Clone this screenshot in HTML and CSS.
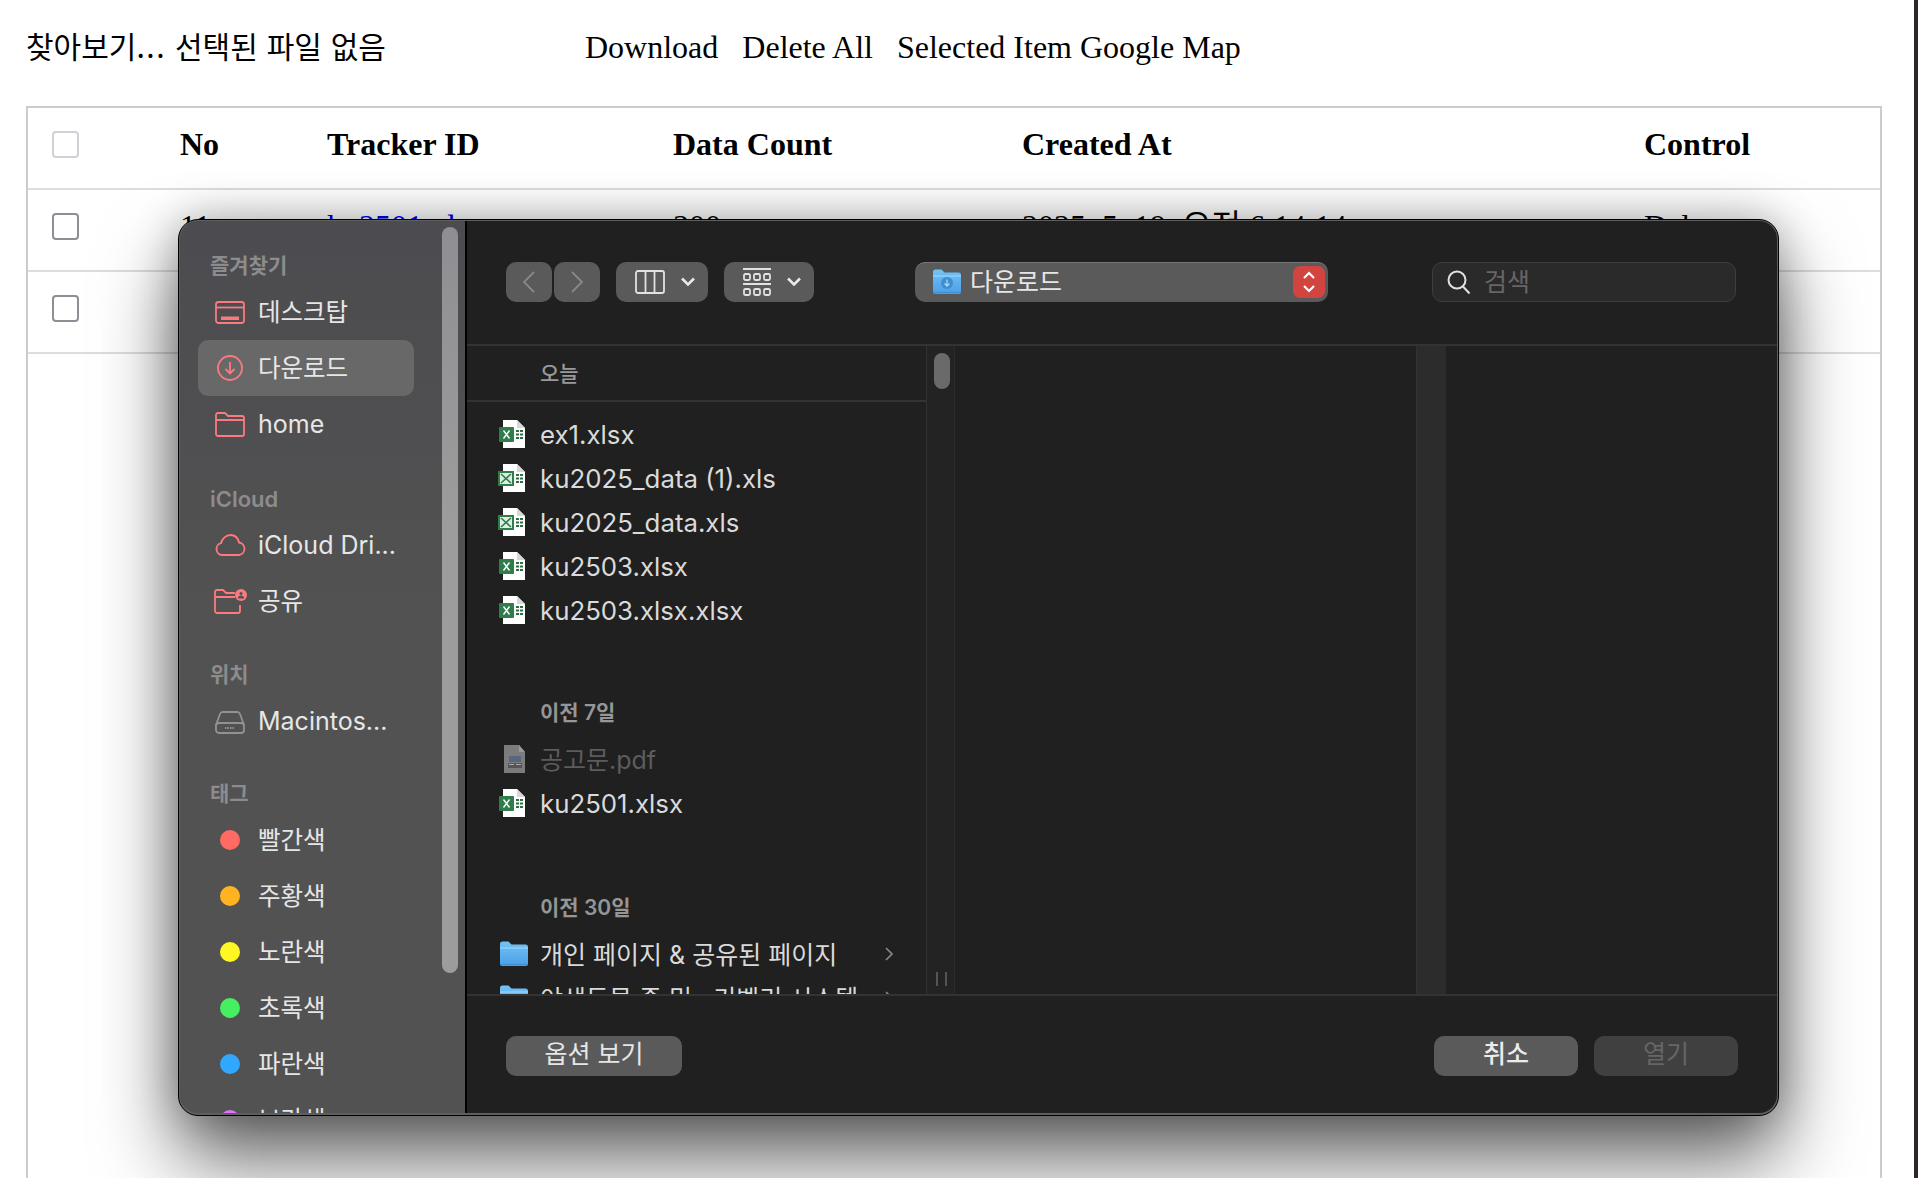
FILE: index.html
```html
<!DOCTYPE html>
<html lang="ko">
<head>
    <meta charset="UTF-8">
    <title>Tracker Data</title>
    <link rel="stylesheet" href="styles.css">
</head>
<body>
    <svg class="defs" width="0" height="0">
        <defs>
            <linearGradient id="folder-fill" x1="0" y1="0" x2="0" y2="1">
                <stop offset="0" stop-color="#74c2f6"/>
                <stop offset="1" stop-color="#4a9fe6"/>
            </linearGradient>
        </defs>
        <symbol id="xlsx" viewBox="0 0 28 30">
            <path d="M5 1h14l8 8v20H5z" fill="#fff"/>
            <path d="M19 1l8 8h-8z" fill="#d8d8d8"/>
            <rect x="1" y="8" width="15" height="15" rx="1" fill="#2f7d4b"/>
            <path d="M5.5 11.5l6 8M11.5 11.5l-6 8" stroke="#fff" stroke-width="1.4"/>
            <path d="M18 11h3v2h-3zM22 11h3v2h-3zM18 14.5h3v2h-3zM22 14.5h3v2h-3zM18 18h3v2h-3zM22 18h3v2h-3z" fill="#2f6d45"/>
        </symbol>
        <symbol id="xls" viewBox="0 0 28 30">
            <path d="M5 1h14l8 8v20H5z" fill="#fff"/>
            <path d="M19 1l8 8h-8z" fill="#d8d8d8"/>
            <rect x="0" y="8" width="16" height="15" fill="#2f7d4b"/>
            <rect x="2" y="10" width="12" height="11" fill="#dcefe2"/>
            <path d="M3 11l10 9M13 11l-10 9" stroke="#2f7d4b" stroke-width="1.6"/>
            <path d="M18 11h3v2h-3zM22 11h3v2h-3zM18 14.5h3v2h-3zM22 14.5h3v2h-3zM18 18h3v2h-3zM22 18h3v2h-3z" fill="#2f6d45"/>
        </symbol>
        <symbol id="pdf" viewBox="0 0 28 30">
            <path d="M6 1h15l6 7v21H6z" fill="#7c7c7c"/>
            <path d="M21 1l6 7h-6z" fill="#999"/>
            <rect x="11" y="12" width="12" height="6" fill="#57677f"/>
            <path d="M10 19h14v5H10z" fill="#555"/>
            <path d="M11 20.5h5M18 20.5h5" stroke="#aaa"/>
        </symbol>
        <symbol id="folder" viewBox="0 0 28 26">
            <path d="M0 3a2.500 2.500 0 0 1 2.500-2.500h6l3 3h14a2.500 2.500 0 0 1 2.500 2.500v17a2 2 0 0 1-2 2H2a2 2 0 0 1-2-2z" fill="url(#folder-fill)"/>
            <path d="M0 6h28v2H0z" fill="#86cbf8"/>
            <path d="M0 23h28v1H0z" fill="#3f8ed2"/>
        </symbol>
    </svg>

    <div class="page">
        <div class="topbar">
            <span class="file-input">찾아보기<span class="dots">...</span> 선택된 파일 없음</span>
            <button class="text-btn">Download</button>
            <button class="text-btn">Delete All</button>
            <button class="text-btn">Selected Item Google Map</button>
        </div>

        <div class="table-box">
            <table class="tracker-table">
                <colgroup>
                    <col class="col-check">
                    <col class="col-no">
                    <col class="col-tracker">
                    <col class="col-count">
                    <col class="col-created">
                    <col>
                </colgroup>
                <thead>
                    <tr>
                        <th><input type="checkbox" class="check check-head"></th>
                        <th>No</th>
                        <th>Tracker ID</th>
                        <th>Data Count</th>
                        <th>Created At</th>
                        <th>Control</th>
                    </tr>
                </thead>
                <tbody>
                    <tr>
                        <td><input type="checkbox" class="check"></td>
                        <td>11</td>
                        <td><a href="#">ku2501_data</a></td>
                        <td>300</td>
                        <td>2025. 5. 19. 오전 6:14:14</td>
                        <td>Delete</td>
                    </tr>
                    <tr>
                        <td><input type="checkbox" class="check"></td>
                        <td></td>
                        <td></td>
                        <td></td>
                        <td></td>
                        <td></td>
                    </tr>
                </tbody>
            </table>
        </div>
    </div>
    <div class="screen-edge"></div>

    <!-- file dialog -->
    <div class="dialog">
        <aside class="sidebar">
            <div class="side-scroll"></div>

            <section class="side-section">
                <h4>즐겨찾기</h4>
                <div class="side-item">
                    <svg class="side-icon" viewBox="0 0 30 30"><rect x="1" y="5" width="28" height="21" rx="2.500"/><path d="M1 10.500h28"/><rect class="solid" x="6" y="19.500" width="18" height="3.500"/></svg>
                    <span class="kr">데스크탑</span>
                </div>
                <div class="side-item selected">
                    <svg class="side-icon" viewBox="0 0 30 30"><circle cx="15" cy="15" r="12"/><path d="M15 9v11M10.500 16l4.500 4.500 4.500-4.500"/></svg>
                    <span class="kr">다운로드</span>
                </div>
                <div class="side-item">
                    <svg class="side-icon" viewBox="0 0 30 30"><path d="M1 6a2 2 0 0 1 2-2h7l3 3h14a2 2 0 0 1 2 2v16a2 2 0 0 1-2 2H3a2 2 0 0 1-2-2zM1 11h28"/></svg>
                    home
                </div>
            </section>

            <section class="side-section">
                <h4 class="latin-head">iCloud</h4>
                <div class="side-item">
                    <svg class="side-icon" viewBox="0 0 30 30"><path d="M7 25a6 6 0 0 1-1-11.800C7 8.500 11 5 15.500 5c4.500 0 7.500 3 8.500 7.500a6.300 6.300 0 0 1 0 12.500z"/></svg>
                    iCloud Dri...
                </div>
                <div class="side-item">
                    <svg class="side-icon" viewBox="0 0 30 30"><path d="M25 19v6a2 2 0 0 1-2 2H2a2 2 0 0 1-2-2V6a2 2 0 0 1 2-2h6l3 3h9M0 11h20"/><circle class="solid" cx="26" cy="9" r="6"/><circle cx="26" cy="7.500" r="1.500" fill="#525252" stroke="none"/><path d="M23 12.500a3 3 0 0 1 6 0" fill="#525252" stroke="none"/></svg>
                    <span class="kr">공유</span>
                </div>
            </section>

            <section class="side-section">
                <h4>위치</h4>
                <div class="side-item">
                    <svg class="side-icon grey" viewBox="0 0 30 30"><path d="M1 19l4-11a3 3 0 0 1 3-2h14a3 3 0 0 1 3 2l4 11"/><rect x="1" y="17" width="28" height="10" rx="3"/><path d="M10 22h10" stroke-dasharray="1.500 1"/></svg>
                    Macintos...
                </div>
            </section>

            <section class="side-section">
                <h4>태그</h4>
                <div class="side-item"><span class="tag-slot"><i class="tag-dot dot-red"></i></span><span class="kr">빨간색</span></div>
                <div class="side-item"><span class="tag-slot"><i class="tag-dot dot-orange"></i></span><span class="kr">주황색</span></div>
                <div class="side-item"><span class="tag-slot"><i class="tag-dot dot-yellow"></i></span><span class="kr">노란색</span></div>
                <div class="side-item"><span class="tag-slot"><i class="tag-dot dot-green"></i></span><span class="kr">초록색</span></div>
                <div class="side-item"><span class="tag-slot"><i class="tag-dot dot-blue"></i></span><span class="kr">파란색</span></div>
                <div class="side-item"><span class="tag-slot"><i class="tag-dot dot-purple"></i></span><span class="kr">보라색</span></div>
            </section>
        </aside>

        <div class="main">
            <div class="toolbar">
                <div class="tool-btn nav-btn">
                    <svg width="14" height="24" viewBox="0 0 14 24"><path d="M12 2L2 12l10 10"/></svg>
                </div>
                <div class="tool-btn nav-btn nav-next">
                    <svg width="14" height="24" viewBox="0 0 14 24"><path d="M2 2l10 10L2 22"/></svg>
                </div>
                <div class="tool-btn view-btn">
                    <svg class="light" width="30" height="24" viewBox="0 0 30 24"><rect x="1" y="1" width="28" height="22" rx="2"/><path d="M10.500 1v22M19.500 1v22"/></svg>
                    <svg class="caret" width="14" height="9" viewBox="0 0 14 9"><path d="M1 1.500l6 6 6-6"/></svg>
                </div>
                <div class="tool-btn arrange-btn">
                    <svg class="light" width="28" height="28" viewBox="0 0 28 28"><path d="M0 1h28M0 16h28"/><rect x="1" y="6" width="6" height="6" rx="1.500"/><rect x="11" y="6" width="6" height="6" rx="1.500"/><rect x="21" y="6" width="6" height="6" rx="1.500"/><rect x="1" y="21" width="6" height="6" rx="1.500"/><rect x="11" y="21" width="6" height="6" rx="1.500"/><rect x="21" y="21" width="6" height="6" rx="1.500"/></svg>
                    <svg class="caret" width="14" height="9" viewBox="0 0 14 9"><path d="M1 1.500l6 6 6-6"/></svg>
                </div>
                <div class="location">
                    <svg width="28" height="26" viewBox="0 0 28 26"><use href="#folder"/><circle cx="14" cy="14" r="6" fill="#3f8fd0"/><path d="M14 10.500v6M11.500 14.500l2.500 2.500 2.500-2.500" stroke="#a9d8f8" fill="none" stroke-width="1.300"/></svg>
                    <span class="location-name">다운로드</span>
                    <div class="stepper">
                        <svg width="14" height="26" viewBox="0 0 14 26"><path d="M2 9l5-5 5 5M2 17l5 5 5-5"/></svg>
                    </div>
                </div>
                <div class="search">
                    <svg width="26" height="26" viewBox="0 0 26 26"><circle cx="11" cy="11" r="8.500"/><path d="M17 17.500l6.500 7"/></svg>
                    <span class="kr">검색</span>
                </div>
            </div>

            <div class="browser">
                <div class="column file-column">
                    <div class="group-head">오늘</div>
                    <div class="file-list first-list">
                        <div class="file-row"><svg class="file-icon"><use href="#xlsx"/></svg>ex1.xlsx</div>
                        <div class="file-row"><svg class="file-icon"><use href="#xls"/></svg>ku2025_data (1).xls</div>
                        <div class="file-row"><svg class="file-icon"><use href="#xls"/></svg>ku2025_data.xls</div>
                        <div class="file-row"><svg class="file-icon"><use href="#xlsx"/></svg>ku2503.xlsx</div>
                        <div class="file-row"><svg class="file-icon"><use href="#xlsx"/></svg>ku2503.xlsx.xlsx</div>
                    </div>
                    <div class="group-label">이전 7일</div>
                    <div class="file-row disabled"><svg class="file-icon"><use href="#pdf"/></svg><span class="kr">공고문.pdf</span></div>
                    <div class="file-row"><svg class="file-icon"><use href="#xlsx"/></svg>ku2501.xlsx</div>
                    <div class="group-label later">이전 30일</div>
                    <div class="file-row"><svg class="file-icon folder-icon"><use href="#folder"/></svg><span class="file-name kr">개인 페이지 &amp; 공유된 페이지</span><svg class="row-arrow" width="8" height="14" viewBox="0 0 8 14"><path d="M1 1l6 6-6 6"/></svg></div>
                    <div class="file-row"><svg class="file-icon folder-icon"><use href="#folder"/></svg><span class="file-name kr">야생동물 종 및 , 기벨리 시스템</span><svg class="row-arrow" width="8" height="14" viewBox="0 0 8 14"><path d="M1 1l6 6-6 6"/></svg></div>
                </div>
                <div class="col-track">
                    <div class="track-thumb"></div>
                    <div class="track-grip"><i></i><i></i></div>
                </div>
                <div class="column preview-column"></div>
                <div class="col-track dim-track"></div>
                <div class="column"></div>
            </div>

            <div class="footer">
                <div class="dlg-btn options-btn">옵션 보기</div>
                <div class="dlg-btn cancel-btn">취소</div>
                <div class="dlg-btn open-btn">열기</div>
            </div>
        </div>
    </div>
</body>
</html>
```

FILE: styles.css
```css
*{
    box-sizing: border-box;
}
html, body{
    margin: 0;
    padding: 0;
    height: 1178px;
    overflow: hidden;
}
body{
    display: flex;
    background-color: white;
    font-family: "Liberation Serif", "Noto Sans CJK KR", serif;
    font-size: 32px;
    color: black;
}
.defs{
    position: absolute;
}
.page{
    flex: 1;
    min-width: 0;
}
.screen-edge{
    width: 4px;
    background-color: #2e2626;
}

/* top row */
.topbar{
    height: 106px;
    padding: 0 0 11px 26px;
    display: flex;
    align-items: center;
}
.file-input{
    width: 559px;
    margin-bottom: 5px;
    font-family: "Noto Sans CJK KR", sans-serif;
    font-size: 30px;
    word-spacing: 0.500px;
}
.dots{
    letter-spacing: 1.500px;
}
.text-btn{
    margin-right: 24px;
    padding: 0;
    border: none;
    background: none;
    font-family: inherit;
    font-size: 32px;
    color: black;
}

/* table */
.table-box{
    width: 1856px;
    height: 1100px;
    margin-left: 26px;
    border: 2px solid #ccc;
}
.tracker-table{
    width: 100%;
    table-layout: fixed;
    border-collapse: collapse;
}
.col-check{width: 152px;}
.col-no{width: 147px;}
.col-tracker{width: 346px;}
.col-count{width: 349px;}
.col-created{width: 622px;}
.tracker-table th, .tracker-table td{
    height: 82px;
    padding: 0 0 8px 0;
    text-align: left;
    line-height: 36px;
    border-bottom: 2px solid #ddd;
}
.tracker-table th{
    height: 81px;
}
.tracker-table a{
    color: #0000ee;
    text-decoration: none;
}
.check{
    display: block;
    appearance: none;
    width: 27px;
    height: 27px;
    margin: 0 0 0 24px;
    border: 2px solid #8e8e96;
    border-radius: 4px;
    background-color: white;
}
.check-head{
    border-color: #d0d0d6;
}

/* dialog */
.dialog{
    position: absolute;
    left: 178px;
    top: 219px;
    width: 1601px;
    height: 897px;
    display: flex;
    overflow: hidden;
    padding: 1px 1px 2px 1px;
    border: 1px solid #000;
    border-radius: 20px;
    background-color: #5e5e5e;
    box-shadow: 0 44px 80px rgba(0, 0, 0, 0.6), 0 0 44px rgba(0, 0, 0, 0.28);
    font-family: Inter, "Noto Sans CJK KR", sans-serif;
    font-size: 25px;
    color: #e6e6e6;
}
.kr{
    margin-bottom: 3px;
}
.sidebar{
    position: relative;
    width: 287px;
    flex: none;
    overflow: hidden;
    padding: 27px 0 0 18px;
    border-right: 2px solid #000;
    border-radius: 18px 0 0 18px;
    background: linear-gradient(180deg, #4c4c50 0, #525252 45%);
}
.side-scroll{
    position: absolute;
    left: 262px;
    top: 6px;
    width: 16px;
    height: 746px;
    border-radius: 8px;
    background: linear-gradient(180deg, #8f8f93 0, #9c9c9c 40%);
}
.side-section{
    margin-bottom: 27.500px;
}
.side-section:first-of-type{
    margin-bottom: 29px;
}
.side-section h4{
    height: 36px;
    margin: 0;
    padding-left: 12px;
    font-size: 21px;
    font-weight: 600;
    line-height: 36px;
    color: #8c8c8c;
}
.side-section h4.latin-head{
    font-size: 22px;
}
.side-item{
    width: 216px;
    height: 56px;
    display: flex;
    align-items: center;
    gap: 13px;
    padding-left: 17px;
    white-space: nowrap;
}
.side-item .kr{
    margin-bottom: 4px;
    font-size: 24.500px;
}
.side-item.selected{
    border-radius: 10px;
    background-color: #686868;
}
.side-icon{
    width: 30px;
    height: 30px;
    flex: none;
    overflow: visible;
    fill: none;
    stroke: #fb7a80;
    stroke-width: 1.800;
}
.side-icon .solid{
    fill: #fb7a80;
    stroke: none;
}
.side-icon.grey{
    stroke: #929292;
}
.tag-slot{
    width: 30px;
    display: flex;
    justify-content: center;
}
.tag-dot{
    display: block;
    width: 20px;
    height: 20px;
    border-radius: 50%;
}
.dot-red{background-color: #ff6b62;}
.dot-orange{background-color: #ffb320;}
.dot-yellow{background-color: #fff724;}
.dot-green{background-color: #46ee62;}
.dot-blue{background-color: #30a8ff;}
.dot-purple{background-color: #e374f6;}

.main{
    flex: 1;
    min-width: 0;
    display: flex;
    flex-direction: column;
    border-radius: 0 18px 18px 0;
    overflow: hidden;
    background-color: #202020;
}

/* toolbar */
.toolbar{
    height: 125px;
    flex: none;
    display: flex;
    align-items: center;
    padding: 0 0 2px 39px;
    border-bottom: 2px solid #333;
}
.tool-btn{
    height: 40px;
    display: flex;
    align-items: center;
    border-radius: 10px;
    background-color: #5a5a5a;
}
.tool-btn svg, .location svg, .search svg{
    flex: none;
    fill: none;
}
.nav-btn{
    width: 46px;
    justify-content: center;
    stroke: #888;
    stroke-width: 1.800;
}
.nav-next{
    margin-left: 2px;
}
.view-btn{
    width: 92px;
    margin-left: 16px;
    padding-left: 19px;
}
.arrange-btn{
    width: 90px;
    margin-left: 16px;
    padding-left: 19px;
}
.light{
    stroke: #e2e2e2;
    stroke-width: 1.800;
}
.caret{
    margin-left: 16px;
    stroke: #e8e8e8;
    stroke-width: 2.600;
}
.location{
    width: 413px;
    height: 40px;
    margin-left: 101px;
    display: flex;
    align-items: center;
    padding: 0 3px 0 18px;
    border-top: 1px solid #777;
    border-radius: 10px;
    background-color: #5a5a5a;
}
.location-name{
    flex: 1;
    margin: -5px 0 0 9px;
}
.stepper{
    width: 32px;
    height: 32px;
    display: flex;
    align-items: center;
    justify-content: center;
    border-radius: 7px;
    background-color: #d2443f;
}
.stepper svg{
    stroke: white;
    stroke-width: 2.200;
}
.search{
    width: 304px;
    height: 40px;
    margin-left: 104px;
    display: flex;
    align-items: center;
    gap: 12px;
    padding-left: 13px;
    border: 1px solid #3e3e3e;
    border-radius: 10px;
    background-color: #2a2a2a;
    color: #666;
}
.search svg{
    stroke: #e2e2e2;
    stroke-width: 2;
}

/* columns */
.browser{
    flex: 1;
    min-height: 0;
    display: flex;
    overflow: hidden;
}
.column{
    flex: 1;
    min-width: 0;
}
.file-column{
    width: 459px;
    flex: none;
    overflow: hidden;
}
.preview-column{
    width: 461px;
    flex: none;
}
.col-track{
    width: 29px;
    flex: none;
    display: flex;
    flex-direction: column;
    justify-content: space-between;
    padding: 7px 0 8px 7px;
    border-left: 1px solid #333;
    border-right: 1px solid #2c2c2c;
    background-color: #232323;
}
.dim-track{
    width: 30px;
    background-color: #2c2c2c;
}
.track-thumb{
    width: 16px;
    height: 36px;
    border-radius: 8px;
    background-color: #6a6a6a;
}
.track-grip{
    display: flex;
    gap: 7px;
    padding-left: 2px;
}
.track-grip i{
    width: 2px;
    height: 14px;
    background-color: #555;
}
.group-head{
    height: 56px;
    padding-left: 73px;
    border-bottom: 2px solid #333;
    font-size: 21px;
    font-weight: 500;
    line-height: 56px;
    color: #999;
}
.first-list{
    padding-top: 10px;
}
.group-label{
    height: 50px;
    margin-top: 55px;
    padding-left: 73px;
    font-size: 21px;
    font-weight: 600;
    line-height: 52px;
    color: #969696;
}
.group-label.later{
    margin-top: 57px;
}
.file-row{
    height: 44px;
    display: flex;
    align-items: center;
    gap: 14px;
    padding-left: 31px;
    white-space: nowrap;
    font-size: 25.800px;
    color: #dadada;
}
.file-row .kr{
    font-size: 25px;
}
.file-row.disabled{
    color: #5c5c5c;
}
.file-icon{
    width: 28px;
    height: 30px;
    flex: none;
}
.folder-icon{
    height: 26px;
    margin: 0 -2px 0 2px;
}
.file-name{
    flex: 1;
}
.row-arrow{
    flex: none;
    margin-right: 33px;
    fill: none;
    stroke: #888;
    stroke-width: 1.600;
}

/* bottom buttons */
.footer{
    height: 119px;
    flex: none;
    display: flex;
    align-items: center;
    gap: 16px;
    padding: 3px 39px 0 39px;
    border-top: 2px solid #333;
}
.dlg-btn{
    width: 144px;
    height: 40px;
    border-radius: 10px;
    background-color: #5a5a5a;
    text-align: center;
    line-height: 36px;
}
.options-btn{
    width: 176px;
    margin-right: auto;
}
.cancel-btn{
    font-weight: 500;
    color: #ececec;
}
.open-btn{
    background-color: #404040;
    color: #666;
}
```
